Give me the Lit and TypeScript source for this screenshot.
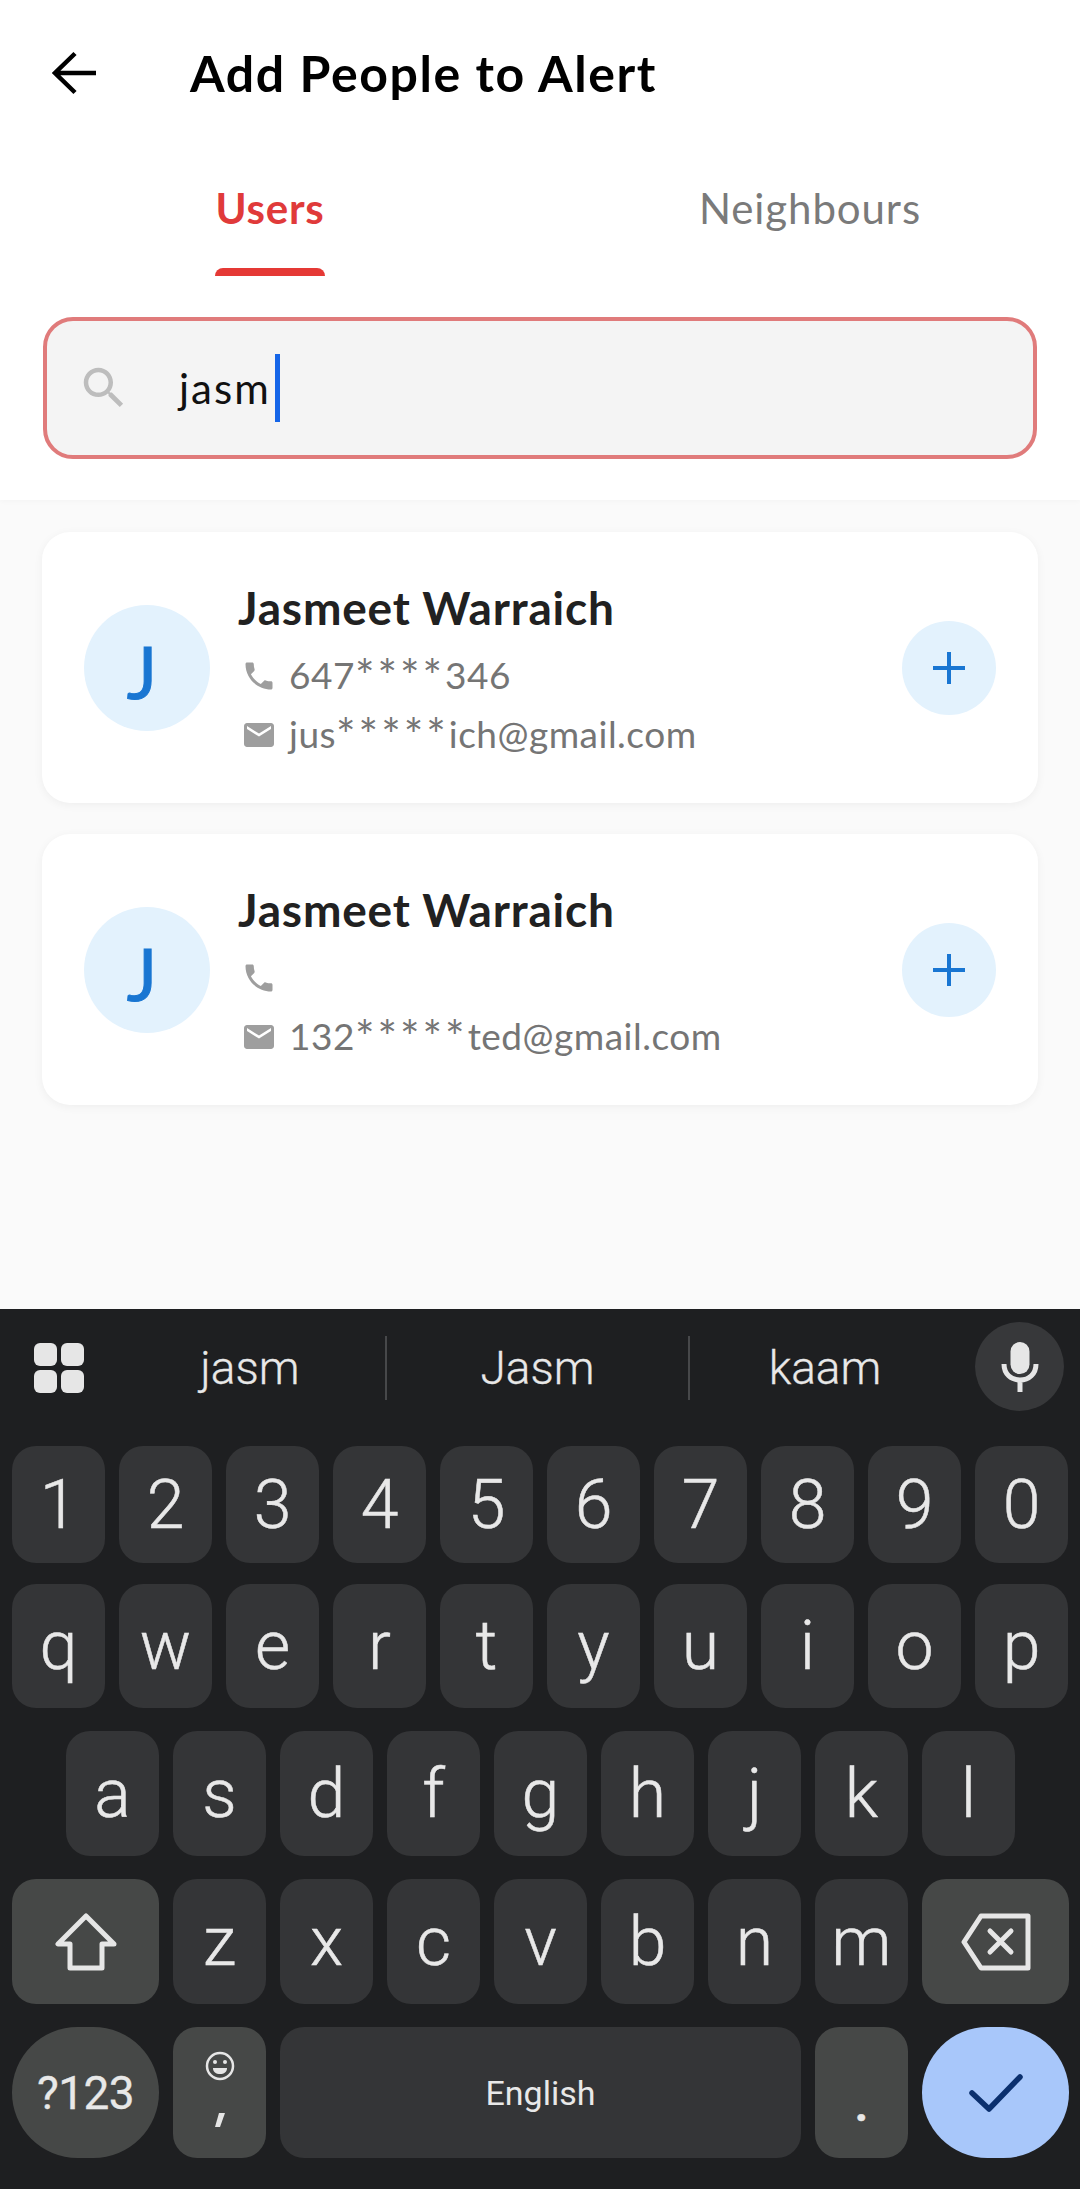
import { LitElement, html, css, svg } from 'lit';
import { customElement } from 'lit/decorators.js';

const ICONS = {
  phone: svg`<path d="M6.62 10.79c1.44 2.83 3.76 5.14 6.59 6.59l2.2-2.2c.27-.27.67-.36 1.02-.24 1.12.37 2.33.57 3.57.57.55 0 1 .45 1 1V20c0 .55-.45 1-1 1-9.39 0-17-7.61-17-17 0-.55.45-1 1-1h3.5c.55 0 1 .45 1 1 0 1.25.2 2.45.57 3.57.11.35.03.74-.25 1.02l-2.2 2.2z"/>`,
  mail: svg`<path d="M20 4H4c-1.1 0-1.99.9-1.99 2L2 18c0 1.1.9 2 2 2h16c1.1 0 2-.9 2-2V6c0-1.1-.9-2-2-2zm0 4l-8 5-8-5V6l8 5 8-5v2z"/>`,
  search: svg`<path d="M15.5 14h-.79l-.28-.27C15.41 12.59 16 11.11 16 9.5 16 5.91 13.09 3 9.5 3S3 5.91 3 9.5 5.91 16 9.5 16c1.61 0 3.09-.59 4.23-1.57l.27.28v.79l5 4.99L20.49 19l-4.99-5zm-6 0C7.01 14 5 11.99 5 9.5S7.01 5 9.5 5 14 7.01 14 9.5 11.99 14 9.5 14z"/>`,
};

const people = [
  { name: 'Jasmeet Warraich', phone: '647****346', email: 'jus*****ich@gmail.com' },
  { name: 'Jasmeet Warraich', phone: '', email: '132*****ted@gmail.com' },
];

@customElement('app-root')
export class AppRoot extends LitElement {
  static styles = css`
    :host {
      display: flex;
      flex-direction: column;
      width: 1080px;
      height: 2189px;
      background: #fafafa;
      font-family: 'Lato', 'Open Sans', sans-serif;
      overflow: hidden;
    }

    .top {
      background: #fff;
      height: 500px;
      flex: none;
      box-shadow: 0 1px 6px rgba(0, 0, 0, 0.03);
    }

    .header {
      height: 146px;
      display: flex;
      align-items: center;
      padding-left: 52px;
      gap: 94px;
    }

    .back {
      width: 44px;
      height: 44px;
      display: block;
    }

    .title {
      font-size: 50px;
      font-weight: 700;
      color: #000;
      letter-spacing: 1.6px;
    }

    .tabs {
      height: 130px;
      display: grid;
      grid-template-columns: 540px 540px;
    }

    .tab {
      display: flex;
      flex-direction: column;
      align-items: center;
      justify-content: flex-end;
    }

    .tab-label {
      height: 122px;
      line-height: 124px;
      font-size: 42px;
      color: #7a7a7a;
      letter-spacing: 0.9px;
    }

    .tab.active .tab-label {
      color: #e03a3a;
      font-weight: 700;
      letter-spacing: 0.8px;
    }

    .tab-mark {
      height: 8px;
      width: 110px;
      border-radius: 8px 8px 0 0;
    }

    .tab.active .tab-mark {
      background: #e53935;
    }

    .search-wrap {
      padding: 41px 43px 0 43px;
    }

    .search {
      height: 142px;
      box-sizing: border-box;
      border: 4px solid #e07b7b;
      border-radius: 30px;
      background: #f4f4f4;
      display: flex;
      align-items: center;
      padding-left: 30px;
    }

    .search-icon {
      width: 54px;
      height: 54px;
      fill: #bdbdbd;
      flex: none;
    }

    .search-text {
      margin-left: 48px;
      font-size: 42px;
      color: #111;
      letter-spacing: 2px;
    }

    .caret {
      width: 5px;
      height: 68px;
      background: #1565e8;
      margin-left: 4px;
    }

    .list {
      height: 809px;
      flex: none;
      box-sizing: border-box;
      padding: 32px 42px 0;
      display: flex;
      flex-direction: column;
      gap: 31px;
    }

    .card {
      height: 271px;
      background: #fff;
      border-radius: 28px;
      box-shadow: 0 2px 10px rgba(0, 0, 0, 0.05);
      display: flex;
      align-items: center;
      padding: 0 42px;
    }

    .avatar {
      width: 126px;
      height: 126px;
      box-sizing: border-box;
      padding: 6px 10px 0 0;
      border-radius: 50%;
      background: #e3f2fd;
      color: #1976d2;
      font-size: 72px;
      font-weight: 400;
      -webkit-text-stroke: 1px #1976d2;
      display: flex;
      align-items: center;
      justify-content: center;
      flex: none;
    }

    .info {
      flex: 1;
      margin-left: 28px;
      padding-top: 41px;
      align-self: flex-start;
      display: flex;
      flex-direction: column;
    }

    .name {
      font-size: 46px;
      font-weight: 700;
      color: #212121;
      height: 70px;
      line-height: 70px;
      margin-bottom: 3px;
      letter-spacing: 0.8px;
    }

    .line {
      height: 59px;
      padding-left: 3px;
      display: flex;
      align-items: center;
      font-size: 37px;
      color: #757575;
      letter-spacing: 0.5px;
    }

    .stars {
      font-size: 46px;
      line-height: 1;
      letter-spacing: 3px;
      vertical-align: -4px;
    }

    .line svg {
      width: 36px;
      height: 36px;
      fill: #9e9e9e;
      margin-right: 12px;
      flex: none;
    }

    .add {
      width: 94px;
      height: 94px;
      border-radius: 50%;
      background: #e3f2fd;
      display: flex;
      align-items: center;
      justify-content: center;
      flex: none;
    }

    .add svg {
      width: 34px;
      height: 34px;
      stroke: #1976d2;
      stroke-width: 4;
      fill: none;
    }

    .keyboard {
      flex: 1;
      background: #1e1f21;
      font-family: 'Roboto', sans-serif;
      color: #e8e8e8;
      display: flex;
      flex-direction: column;
    }

    .suggest {
      height: 137px;
      box-sizing: border-box;
      padding-bottom: 20px;
      display: flex;
      align-items: center;
      position: relative;
      flex: none;
    }

    .grid-icon {
      width: 50px;
      height: 50px;
      margin-left: 34px;
      margin-right: 31px;
      fill: #e6e6e6;
      flex: none;
    }

    .word {
      width: 270px;
      text-align: center;
      font-size: 46px;
      font-weight: 300;
      -webkit-text-stroke: 0.3px #e8e8e8;
      height: 64px;
      line-height: 64px;
      flex: none;
    }

    .word.mid {
      width: 305px;
      border-left: 2px solid #47484a;
      border-right: 2px solid #47484a;
      box-sizing: border-box;
    }

    .mic {
      width: 89px;
      height: 89px;
      border-radius: 50%;
      background: #37383a;
      display: flex;
      align-items: center;
      justify-content: center;
      position: absolute;
      right: 16px;
      top: 13px;
    }

    .mic svg {
      width: 38px;
      height: 50px;
      display: block;
    }

    .row {
      display: flex;
      gap: 14px;
      padding: 0 12px;
      flex: none;
    }

    .row.home {
      padding-left: 66px;
    }

    .key {
      width: 93px;
      flex: none;
      background: #343537;
      border-radius: 24px;
      display: flex;
      align-items: center;
      justify-content: center;
      font-size: 68px;
      font-weight: 300;
      -webkit-text-stroke: 0.5px #e8e8e8;
      line-height: 1;
      box-sizing: border-box;
    }

    .key.fn {
      background: #464847;
    }

    .key.wide {
      width: 147px;
    }

    .key.pill {
      border-radius: 66px;
    }

    .key.space {
      width: 521px;
      font-size: 34px;
      font-weight: 400;
      -webkit-text-stroke: 0;
    }

    .key.sym {
      font-size: 46px;
      font-weight: 400;
      -webkit-text-stroke: 0.3px #e8e8e8;
      letter-spacing: -0.6px;
    }

    .key.done {
      background: #a8c7fa;
    }

    .key.emoji {
      flex-direction: column;
      justify-content: flex-start;
      padding-top: 24px;
      gap: 32px;
    }

    .key svg {
      display: block;
    }

    .dot {
      font-size: 46px;
      font-weight: 700;
      padding-top: 24px;
    }
  `;

  // the masked runs are set larger and wider than the rest of the line
  renderMasked(text: string) {
    return text.split(/(\*+)/).map((part) =>
      part.startsWith('*') ? html`<span class="stars">${part}</span>` : part
    );
  }

  renderCard(p: { name: string; phone: string; email: string }) {
    return html`
      <div class="card">
        <div class="avatar">J</div>
        <div class="info">
          <div class="name">${p.name}</div>
          <div class="line">
            <svg viewBox="0 0 24 24">${ICONS.phone}</svg>
            <span>${this.renderMasked(p.phone)}</span>
          </div>
          <div class="line">
            <svg viewBox="0 0 24 24">${ICONS.mail}</svg>
            <span>${this.renderMasked(p.email)}</span>
          </div>
        </div>
        <div class="add">
          <svg viewBox="0 0 34 34"><path d="M17 1v32M1 17h32" /></svg>
        </div>
      </div>
    `;
  }

  renderKeys(keys: string, height: number, top: number, home = false) {
    return html`
      <div class="row ${home ? 'home' : ''}" style="height:${height}px;margin-top:${top}px">
        ${keys.split('').map((k) => html`<div class="key">${k}</div>`)}
      </div>
    `;
  }

  render() {
    return html`
      <div class="top">
        <div class="header">
          <svg class="back" viewBox="0 0 44 44" fill="none" stroke="#000" stroke-width="4.5">
            <path d="M44 22H4M23 2.5L3 22l20 19.5" />
          </svg>
          <div class="title">Add People to Alert</div>
        </div>
        <div class="tabs">
          <div class="tab active">
            <div class="tab-label">Users</div>
            <div class="tab-mark"></div>
          </div>
          <div class="tab">
            <div class="tab-label">Neighbours</div>
            <div class="tab-mark"></div>
          </div>
        </div>
        <div class="search-wrap">
          <div class="search">
            <svg class="search-icon" viewBox="0 0 24 24">${ICONS.search}</svg>
            <span class="search-text">jasm</span>
            <span class="caret"></span>
          </div>
        </div>
      </div>

      <div class="list">${people.map((p) => this.renderCard(p))}</div>

      <div class="keyboard">
        <div class="suggest">
          <svg class="grid-icon" viewBox="0 0 50 50">
            <rect x="0" y="0" width="23" height="23" rx="6" />
            <rect x="27" y="0" width="23" height="23" rx="6" />
            <rect x="0" y="27" width="23" height="23" rx="6" />
            <rect x="27" y="27" width="23" height="23" rx="6" />
          </svg>
          <div class="word">jasm</div>
          <div class="word mid">Jasm</div>
          <div class="word">kaam</div>
          <div class="mic">
            <svg viewBox="0 0 38 50" fill="none">
              <rect x="9.5" y="0" width="19" height="32" rx="9.5" fill="#e6e6e6" />
              <path d="M3 22c0 10 7 16 16 16s16-6 16-16M19 38v12" stroke="#e6e6e6" stroke-width="5" />
            </svg>
          </div>
        </div>
        ${this.renderKeys('1234567890', 117, 0)}
        ${this.renderKeys('qwertyuiop', 124, 21)}
        ${this.renderKeys('asdfghjkl', 125, 23, true)}
        <div class="row" style="height:125px;margin-top:23px">
          <div class="key fn wide">
            <svg width="62" height="58" viewBox="0 0 62 58" fill="none" stroke="#e6e6e6" stroke-width="5" stroke-linejoin="round">
              <path d="M31 3L3 31h12v24h32V31h12z" />
            </svg>
          </div>
          ${'zxcvbnm'.split('').map((k) => html`<div class="key">${k}</div>`)}
          <div class="key fn wide">
            <svg width="70" height="58" viewBox="0 0 70 58" fill="none" stroke="#e6e6e6" stroke-width="5" stroke-linejoin="round" stroke-linecap="round">
              <path d="M20 3h47v52H20L3 29z" />
              <path d="M29 18l21 21M50 18L29 39" />
            </svg>
          </div>
        </div>
        <div class="row" style="height:131px;margin-top:23px">
          <div class="key fn wide pill sym">?123</div>
          <div class="key fn emoji">
            <svg width="30" height="30" viewBox="0 0 30 30">
              <circle cx="15" cy="15" r="13" fill="none" stroke="#e6e6e6" stroke-width="2.5" />
              <circle cx="10" cy="11" r="2" fill="#e6e6e6" />
              <circle cx="20" cy="11" r="2" fill="#e6e6e6" />
              <path d="M8 17h14c0 4-3 6-7 6s-7-2-7-6z" fill="#e6e6e6" />
            </svg>
            <svg width="10" height="14" viewBox="0 0 10 14">
              <path d="M4 0h6L5 14H0z" fill="#e6e6e6" />
            </svg>
          </div>
          <div class="key space">English</div>
          <div class="key fn dot">.</div>
          <div class="key wide pill done">
            <svg width="54" height="40" viewBox="0 0 54 40" fill="none" stroke="#0b306e" stroke-width="5.5" stroke-linecap="round" stroke-linejoin="round">
              <path d="M3 20l17 16L51 4" />
            </svg>
          </div>
        </div>
      </div>
    `;
  }
}
